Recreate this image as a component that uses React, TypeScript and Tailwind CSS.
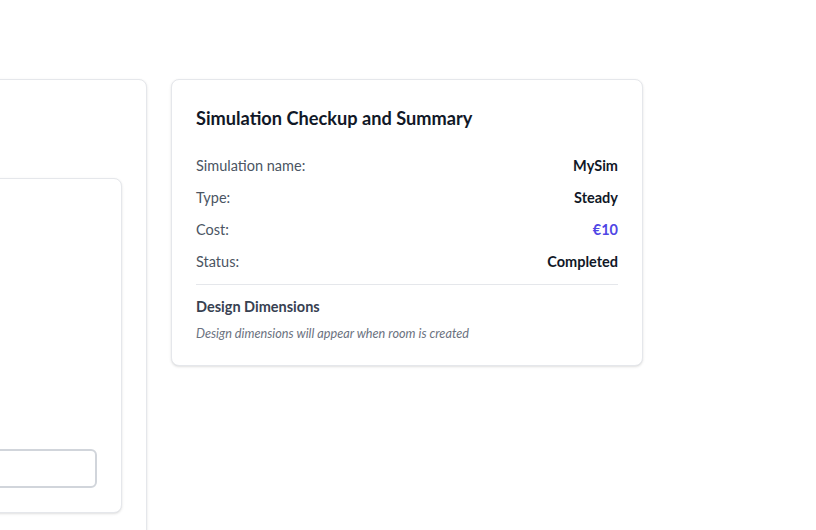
export default function App() {
  return (
    <div
      className="min-h-[530px] w-[816px] overflow-hidden bg-white"
      style={{ fontFamily: 'Lato, "Noto Sans", sans-serif' }}
    >
      <div className="flex items-start gap-6 pt-[79px]">
        <div className="-ml-[254px] h-[470px] w-[401px] shrink-0 rounded-lg border border-[#e5e7eb] bg-white p-6 shadow-sm">
          <div className="mt-[74px] flex h-[335px] flex-col justify-end rounded-lg border border-[#e5e7eb] bg-white p-6 shadow-sm">
            <div className="h-[39px] w-full rounded-md border-2 border-[#d1d5db] bg-white" />
          </div>
        </div>
        <div className="w-[472px] shrink-0 rounded-lg border border-[#e5e7eb] bg-white p-6 shadow-sm">
          <h2 className="mb-6 text-[18.2px] font-bold leading-7 text-[#111827]">
            Simulation Checkup and Summary
          </h2>
          <div className="flex flex-col gap-3 text-[14.5px] leading-5">
            <div className="flex justify-between">
              <span className="text-[#4b5563]">Simulation name:</span>
              <span className="font-bold text-[#111827]">MySim</span>
            </div>
            <div className="flex justify-between">
              <span className="text-[#4b5563]">Type:</span>
              <span className="font-bold text-[#111827]">Steady</span>
            </div>
            <div className="flex justify-between">
              <span className="text-[#4b5563]">Cost:</span>
              <span className="font-bold text-[#4f46e5]">€10</span>
            </div>
            <div className="flex justify-between">
              <span className="text-[#4b5563]">Status:</span>
              <span className="font-bold text-[#111827]">Completed</span>
            </div>
          </div>
          <div className="mt-3 border-t border-[#e5e7eb] pt-3">
            <h3 className="text-[14.5px] font-bold leading-5 text-[#374151]">Design Dimensions</h3>
            <p className="mt-2 text-[12.7px] italic leading-4 text-[#6b7280]">
              Design dimensions will appear when room is created
            </p>
          </div>
        </div>
      </div>
    </div>
  );
}
